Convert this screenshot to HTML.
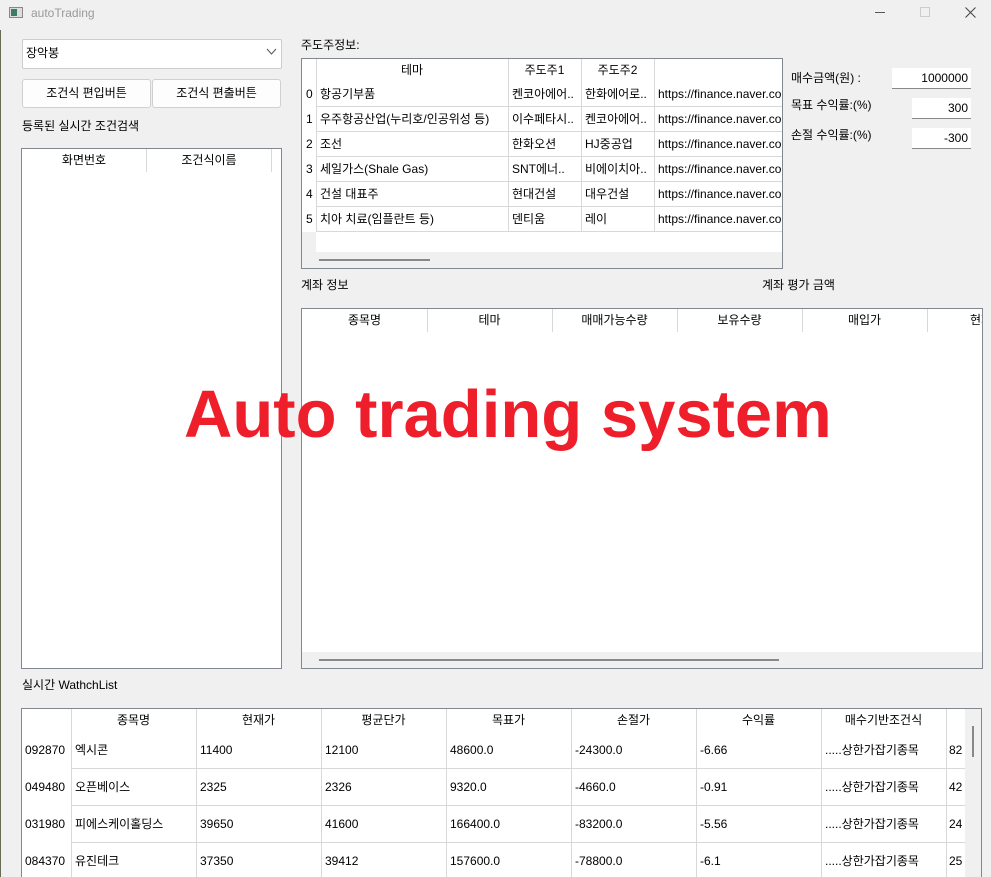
<!DOCTYPE html>
<html><head><meta charset="utf-8">
<style>
*{margin:0;padding:0;box-sizing:border-box}
html,body{width:991px;height:877px;overflow:hidden}
body{background:#f0f0f0;position:relative;font-family:"Liberation Sans","Noto Sans CJK KR",sans-serif;font-size:12px;color:#000}
.a{position:absolute}
.t{position:absolute;white-space:nowrap;line-height:14px}
.box{position:absolute;background:#fff;border:1px solid #828790}
.vl{position:absolute;width:1px;background:#d8d8d8}
.hl{position:absolute;height:1px;background:#d8d8d8}
.btn{position:absolute;background:#fdfdfd;border:1px solid #d0d0d0;border-radius:3px;text-align:center;line-height:26px}
.inp{position:absolute;background:#fff;border-bottom:1px solid #888;text-align:right;padding-right:3px;line-height:20px}
.hd{position:absolute;text-align:center;line-height:24px;white-space:nowrap;overflow:hidden}
</style></head><body>
<div class="a" style="left:0;top:30px;width:1px;height:847px;background:#6b6a55"></div>
<!-- title -->
<div class="a" style="left:9px;top:7px;width:14px;height:11px;border:1px solid #888;background:#ddd"></div>
<div class="a" style="left:11px;top:9px;width:6px;height:7px;background:#3c7a6a"></div>
<div class="t" style="left:31px;top:6px;color:#999;font-size:12px">autoTrading</div>
<div class="a" style="left:875px;top:12px;width:10px;height:1px;background:#555"></div>
<div class="a" style="left:920px;top:7px;width:10px;height:10px;border:1px solid #ccc"></div>
<svg class="a" style="left:965px;top:7px" width="11" height="11"><path d="M0.5 0.5 L10.5 10.5 M10.5 0.5 L0.5 10.5" stroke="#444" stroke-width="1"/></svg>

<!-- left -->
<div class="a" style="left:22px;top:39px;width:260px;height:30px;background:#fff;border:1px solid #ccc;border-radius:2px"></div>
<div class="t" style="left:26px;top:46px">장악봉</div>
<svg class="a" style="left:266px;top:48px" width="11" height="8"><path d="M1 1 L5.5 6 L10 1" stroke="#555" fill="none"/></svg>
<div class="btn" style="left:22px;top:79px;width:129px;height:29px">조건식 편입버튼</div>
<div class="btn" style="left:152px;top:79px;width:129px;height:29px">조건식 편출버튼</div>
<div class="t" style="left:22px;top:119px">등록된 실시간 조건검색</div>
<div class="box" style="left:21px;top:148px;width:261px;height:521px"></div>
<div class="hd" style="left:22px;top:148px;width:124px">화면번호</div>
<div class="hd" style="left:147px;top:148px;width:124px">조건식이름</div>
<div class="vl" style="left:146px;top:149px;height:23px"></div>
<div class="vl" style="left:271px;top:149px;height:23px"></div>

<!-- 주도주 -->
<div class="t" style="left:301px;top:38px">주도주정보:</div>
<div class="box" style="left:301px;top:58px;width:482px;height:211px"></div>
<div class="a" style="left:302px;top:232px;width:14px;height:20px;background:#f0f0f0"></div>
<div class="a" style="left:302px;top:252px;width:480px;height:16px;background:#f0f0f0"></div>
<div class="a" style="left:319px;top:259px;width:111px;height:2px;background:#888"></div>
<div class="vl" style="left:316px;top:59px;height:173px"></div>
<div class="vl" style="left:508px;top:59px;height:173px"></div>
<div class="vl" style="left:581px;top:59px;height:173px"></div>
<div class="vl" style="left:654px;top:59px;height:173px"></div>
<div class="hl" style="left:316px;top:106px;width:466px"></div>
<div class="hl" style="left:316px;top:131px;width:466px"></div>
<div class="hl" style="left:316px;top:156px;width:466px"></div>
<div class="hl" style="left:316px;top:181px;width:466px"></div>
<div class="hl" style="left:316px;top:206px;width:466px"></div>
<div class="hl" style="left:316px;top:231px;width:466px"></div>
<div class="hd" style="left:316px;top:58px;width:192px">테마</div>
<div class="hd" style="left:508px;top:58px;width:73px">주도주1</div>
<div class="hd" style="left:581px;top:58px;width:73px">주도주2</div>
<div style="position:absolute;left:302px;top:87px;width:480px;overflow:hidden;height:145px">
<div class="t" style="left:4px;top:0">0</div><div class="t" style="left:18px;top:0">항공기부품</div><div class="t" style="left:210px;top:0">켄코아에어..</div><div class="t" style="left:283px;top:0">한화에어로..</div><div class="t" style="left:356px;top:0">https://finance.naver.com</div>
<div class="t" style="left:4px;top:25px">1</div><div class="t" style="left:18px;top:25px;width:188px;overflow:hidden">우주항공산업(누리호/인공위성 등)</div><div class="t" style="left:210px;top:25px">이수페타시..</div><div class="t" style="left:283px;top:25px">켄코아에어..</div><div class="t" style="left:356px;top:25px">https://finance.naver.com</div>
<div class="t" style="left:4px;top:50px">2</div><div class="t" style="left:18px;top:50px">조선</div><div class="t" style="left:210px;top:50px">한화오션</div><div class="t" style="left:283px;top:50px">HJ중공업</div><div class="t" style="left:356px;top:50px">https://finance.naver.com</div>
<div class="t" style="left:4px;top:75px">3</div><div class="t" style="left:18px;top:75px">세일가스(Shale Gas)</div><div class="t" style="left:210px;top:75px">SNT에너..</div><div class="t" style="left:283px;top:75px">비에이치아..</div><div class="t" style="left:356px;top:75px">https://finance.naver.com</div>
<div class="t" style="left:4px;top:100px">4</div><div class="t" style="left:18px;top:100px">건설 대표주</div><div class="t" style="left:210px;top:100px">현대건설</div><div class="t" style="left:283px;top:100px">대우건설</div><div class="t" style="left:356px;top:100px">https://finance.naver.com</div>
<div class="t" style="left:4px;top:125px">5</div><div class="t" style="left:18px;top:125px">치아 치료(임플란트 등)</div><div class="t" style="left:210px;top:125px">덴티움</div><div class="t" style="left:283px;top:125px">레이</div><div class="t" style="left:356px;top:125px">https://finance.naver.com</div>
</div>

<!-- right fields -->
<div class="t" style="left:791px;top:71px">매수금액(원) :</div>
<div class="inp" style="left:892px;top:68px;width:79px;height:21px">1000000</div>
<div class="t" style="left:791px;top:98px">목표 수익률:(%)</div>
<div class="inp" style="left:912px;top:98px;width:59px;height:21px">300</div>
<div class="t" style="left:791px;top:128px">손절 수익률:(%)</div>
<div class="inp" style="left:912px;top:128px;width:59px;height:21px">-300</div>

<!-- 계좌 -->
<div class="t" style="left:301px;top:278px">계좌 정보</div>
<div class="t" style="left:762px;top:278px">계좌 평가 금액</div>
<div class="box" style="left:301px;top:308px;width:682px;height:361px"></div>
<div class="a" style="left:302px;top:652px;width:680px;height:16px;background:#f0f0f0"></div>
<div class="a" style="left:319px;top:659px;width:460px;height:2px;background:#888"></div>
<div class="vl" style="left:427px;top:309px;height:23px"></div>
<div class="vl" style="left:552px;top:309px;height:23px"></div>
<div class="vl" style="left:677px;top:309px;height:23px"></div>
<div class="vl" style="left:802px;top:309px;height:23px"></div>
<div class="vl" style="left:927px;top:309px;height:23px"></div>
<div class="hd" style="left:302px;top:308px;width:125px">종목명</div>
<div class="hd" style="left:427px;top:308px;width:125px">테마</div>
<div class="hd" style="left:552px;top:308px;width:125px">매매가능수량</div>
<div class="hd" style="left:677px;top:308px;width:125px">보유수량</div>
<div class="hd" style="left:802px;top:308px;width:125px">매입가</div>
<div class="t" style="left:970px;top:313px;width:12px;overflow:hidden">현재가</div>

<!-- big text -->
<div class="t" style="left:184px;top:375px;font-size:67px;line-height:80px;font-weight:bold;color:#ee1f2b">Auto trading system</div>

<!-- watchlist -->
<div class="t" style="left:22px;top:678px">실시간 WathchList</div>
<div class="box" style="left:21px;top:708px;width:961px;height:180px"></div>
<div class="a" style="left:965px;top:709px;width:16px;height:168px;background:#f0f0f0"></div>
<div class="a" style="left:972px;top:726px;width:2px;height:31px;background:#888"></div>
<div class="vl" style="left:71px;top:709px;height:168px"></div>
<div class="vl" style="left:196px;top:709px;height:168px"></div>
<div class="vl" style="left:321px;top:709px;height:168px"></div>
<div class="vl" style="left:446px;top:709px;height:168px"></div>
<div class="vl" style="left:571px;top:709px;height:168px"></div>
<div class="vl" style="left:696px;top:709px;height:168px"></div>
<div class="vl" style="left:821px;top:709px;height:168px"></div>
<div class="vl" style="left:946px;top:709px;height:168px"></div>
<div class="hl" style="left:71px;top:768px;width:894px"></div>
<div class="hl" style="left:71px;top:805px;width:894px"></div>
<div class="hl" style="left:71px;top:842px;width:894px"></div>
<div class="hd" style="left:71px;top:708px;width:125px">종목명</div>
<div class="hd" style="left:196px;top:708px;width:125px">현재가</div>
<div class="hd" style="left:321px;top:708px;width:125px">평균단가</div>
<div class="hd" style="left:446px;top:708px;width:125px">목표가</div>
<div class="hd" style="left:571px;top:708px;width:125px">손절가</div>
<div class="hd" style="left:696px;top:708px;width:125px">수익률</div>
<div class="hd" style="left:821px;top:708px;width:125px">매수기반조건식</div>
<div style="position:absolute;left:22px;top:743px;width:943px;height:134px;overflow:hidden">
<div class="t" style="left:3px;top:0">092870</div><div class="t" style="left:53px;top:0">엑시콘</div><div class="t" style="left:178px;top:0">11400</div><div class="t" style="left:303px;top:0">12100</div><div class="t" style="left:428px;top:0">48600.0</div><div class="t" style="left:553px;top:0">-24300.0</div><div class="t" style="left:678px;top:0">-6.66</div><div class="t" style="left:803px;top:0">.....상한가잡기종목</div><div class="t" style="left:927px;top:0">82</div>
<div class="t" style="left:3px;top:37px">049480</div><div class="t" style="left:53px;top:37px">오픈베이스</div><div class="t" style="left:178px;top:37px">2325</div><div class="t" style="left:303px;top:37px">2326</div><div class="t" style="left:428px;top:37px">9320.0</div><div class="t" style="left:553px;top:37px">-4660.0</div><div class="t" style="left:678px;top:37px">-0.91</div><div class="t" style="left:803px;top:37px">.....상한가잡기종목</div><div class="t" style="left:927px;top:37px">42</div>
<div class="t" style="left:3px;top:74px">031980</div><div class="t" style="left:53px;top:74px">피에스케이홀딩스</div><div class="t" style="left:178px;top:74px">39650</div><div class="t" style="left:303px;top:74px">41600</div><div class="t" style="left:428px;top:74px">166400.0</div><div class="t" style="left:553px;top:74px">-83200.0</div><div class="t" style="left:678px;top:74px">-5.56</div><div class="t" style="left:803px;top:74px">.....상한가잡기종목</div><div class="t" style="left:927px;top:74px">24</div>
<div class="t" style="left:3px;top:111px">084370</div><div class="t" style="left:53px;top:111px">유진테크</div><div class="t" style="left:178px;top:111px">37350</div><div class="t" style="left:303px;top:111px">39412</div><div class="t" style="left:428px;top:111px">157600.0</div><div class="t" style="left:553px;top:111px">-78800.0</div><div class="t" style="left:678px;top:111px">-6.1</div><div class="t" style="left:803px;top:111px">.....상한가잡기종목</div><div class="t" style="left:927px;top:111px">25</div>
</div>
</body></html>
